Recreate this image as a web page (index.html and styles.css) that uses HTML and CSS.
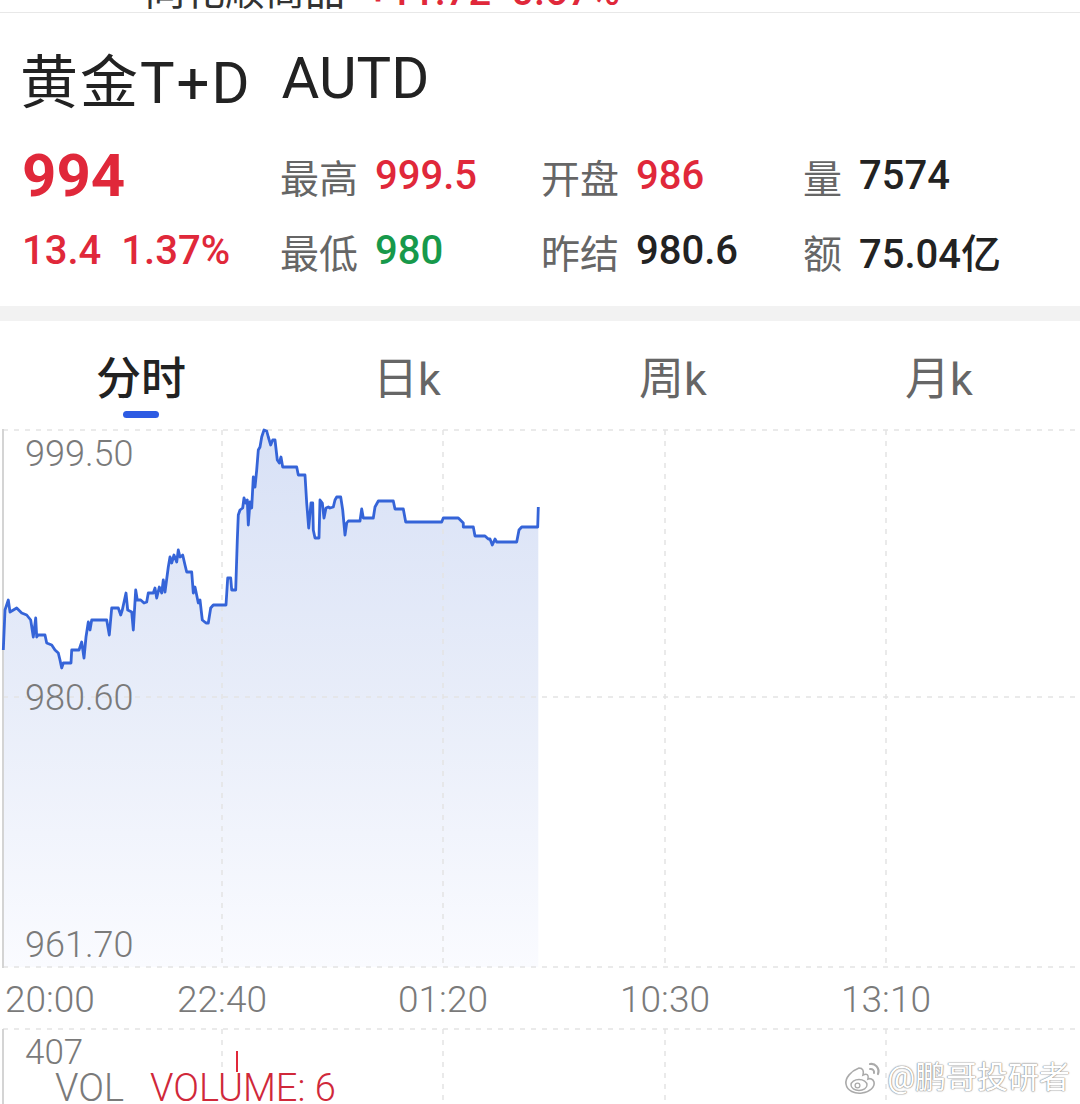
FILE: index.html
```html
<!DOCTYPE html>
<html lang="zh-CN">
<head>
<meta charset="utf-8">
<title>黄金T+D</title>
<link rel="stylesheet" href="styles.css">
</head>
<body>
<div class="page">
  <div class="topstrip">
    <div class="ticker"><span class="tk-name">同花顺商品</span><span class="tk-val">+11.72&nbsp;&nbsp;0.67%</span></div>
  </div>

  <div class="title"><span class="name">黄金T+D</span><span class="code">AUTD</span></div>

  <div class="quote">
    <div class="cell"><span class="price up">994</span></div>
    <div class="cell"><span class="lbl">最高</span><span class="val up">999.5</span></div>
    <div class="cell"><span class="lbl">开盘</span><span class="val up">986</span></div>
    <div class="cell"><span class="lbl">量</span><span class="val">7574</span></div>
    <div class="cell changes"><span class="chg up">13.4</span><span class="chg up">1.37%</span></div>
    <div class="cell"><span class="lbl">最低</span><span class="val down">980</span></div>
    <div class="cell"><span class="lbl">昨结</span><span class="val">980.6</span></div>
    <div class="cell"><span class="lbl">额</span><span class="val">75.04亿</span></div>
  </div>

  <div class="band"></div>

  <div class="tabs">
    <div class="tab active"><span class="tab-text">分时</span><span class="tab-bar"></span></div>
    <div class="tab"><span class="tab-text">日k</span></div>
    <div class="tab"><span class="tab-text">周k</span></div>
    <div class="tab"><span class="tab-text">月k</span></div>
  </div>

  <div class="chart">
    <svg class="chart-svg" width="1080" height="542" viewBox="0 428 1080 542" xmlns="http://www.w3.org/2000/svg">
      <defs>
        <linearGradient id="fillg" x1="0" y1="430" x2="0" y2="967" gradientUnits="userSpaceOnUse">
          <stop offset="0" stop-color="#d8e1f6"/>
          <stop offset="0.5" stop-color="#e8edf9"/>
          <stop offset="1" stop-color="#fafbff"/>
        </linearGradient>
      </defs>
      <path d="M3.3,650 L5,610 L8.3,600 L10,612 L16.7,608 L21.7,613 L26.7,615 L30.7,620 L33.3,637 L35.7,618 L36.7,637 L38.3,635 L45,635 L46.7,643 L51.7,645 L55,650 L58.3,653 L60,660 L61.7,668 L63.3,663 L71,663 L71.7,650 L79,650 L81.7,642 L84,658 L86,637 L88.3,622 L90,630 L91.7,620 L106.7,620 L109.3,635 L111.7,608 L118.3,608 L120.7,615 L122.3,610 L126,593 L127.7,610 L131.7,612 L133.3,630 L135.7,590 L137.3,600 L140.7,600 L144,603 L146.7,602 L148.3,593 L153.3,593 L155,588 L156.7,598 L159.3,587 L161.7,593 L163.3,580 L165,592 L168.3,567 L170,557 L171.7,563 L174,555 L176.7,562 L178.3,550 L180,557 L182.7,555 L185,565 L186.7,572 L191.7,572 L193.3,593 L195,587 L198.3,603 L200,600 L202.3,620 L206,623 L208.3,623 L210.7,608 L213.3,605 L226,605 L227.7,578 L230.7,578 L231.7,590 L235.7,590 L237.3,540 L238.3,515 L240,510 L242.7,508 L244,498 L245.7,503 L247.3,500 L248.3,525 L250,502 L251.7,508 L253.3,477 L255,487 L256.7,470 L258.3,450 L260,447 L261.7,437 L264,430 L266.7,431 L268.3,437 L270.7,445 L272.7,440 L275,440 L277.3,460 L279.3,463 L281,457 L282.7,467 L296.7,467 L298.3,475 L305,475 L306.7,503 L308.7,528 L311,503 L312.7,503 L313.3,530 L315,538 L319,538 L320,500 L322.3,503 L324,518 L326,508 L328.3,507 L330,508 L333.3,507 L335,500 L336.7,497 L340.7,497 L342.7,510 L345,535 L346.7,523 L348.3,521 L360,521 L361.7,509 L363.3,518 L373.3,518 L375,507 L378.3,501 L393.3,501 L395,509 L403.3,509 L405.7,522 L441.7,522 L443.3,518 L458.3,518 L463.3,523 L463.3,527 L473.3,527 L475,536 L485,536 L488.3,539 L490,539 L492.3,545 L495,539 L496.7,542 L516.7,542 L519,530 L521.7,527 L537.7,527 L538.3,507 L538.3,967 L3.3,967 Z" fill="url(#fillg)"/>
      <g class="grid">
        <line x1="3" y1="430" x2="1080" y2="430"/>
        <line x1="3" y1="697" x2="1080" y2="697"/>
        <line x1="3" y1="967" x2="1080" y2="967"/>
        <line x1="222" y1="430" x2="222" y2="967"/>
        <line x1="443" y1="430" x2="443" y2="967"/>
        <line x1="665" y1="430" x2="665" y2="967"/>
        <line x1="886" y1="430" x2="886" y2="967"/>
      </g>
      <line class="axis" x1="3" y1="429" x2="3" y2="968"/>
      <path class="price-line" d="M3.3,650 L5,610 L8.3,600 L10,612 L16.7,608 L21.7,613 L26.7,615 L30.7,620 L33.3,637 L35.7,618 L36.7,637 L38.3,635 L45,635 L46.7,643 L51.7,645 L55,650 L58.3,653 L60,660 L61.7,668 L63.3,663 L71,663 L71.7,650 L79,650 L81.7,642 L84,658 L86,637 L88.3,622 L90,630 L91.7,620 L106.7,620 L109.3,635 L111.7,608 L118.3,608 L120.7,615 L122.3,610 L126,593 L127.7,610 L131.7,612 L133.3,630 L135.7,590 L137.3,600 L140.7,600 L144,603 L146.7,602 L148.3,593 L153.3,593 L155,588 L156.7,598 L159.3,587 L161.7,593 L163.3,580 L165,592 L168.3,567 L170,557 L171.7,563 L174,555 L176.7,562 L178.3,550 L180,557 L182.7,555 L185,565 L186.7,572 L191.7,572 L193.3,593 L195,587 L198.3,603 L200,600 L202.3,620 L206,623 L208.3,623 L210.7,608 L213.3,605 L226,605 L227.7,578 L230.7,578 L231.7,590 L235.7,590 L237.3,540 L238.3,515 L240,510 L242.7,508 L244,498 L245.7,503 L247.3,500 L248.3,525 L250,502 L251.7,508 L253.3,477 L255,487 L256.7,470 L258.3,450 L260,447 L261.7,437 L264,430 L266.7,431 L268.3,437 L270.7,445 L272.7,440 L275,440 L277.3,460 L279.3,463 L281,457 L282.7,467 L296.7,467 L298.3,475 L305,475 L306.7,503 L308.7,528 L311,503 L312.7,503 L313.3,530 L315,538 L319,538 L320,500 L322.3,503 L324,518 L326,508 L328.3,507 L330,508 L333.3,507 L335,500 L336.7,497 L340.7,497 L342.7,510 L345,535 L346.7,523 L348.3,521 L360,521 L361.7,509 L363.3,518 L373.3,518 L375,507 L378.3,501 L393.3,501 L395,509 L403.3,509 L405.7,522 L441.7,522 L443.3,518 L458.3,518 L463.3,523 L463.3,527 L473.3,527 L475,536 L485,536 L488.3,539 L490,539 L492.3,545 L495,539 L496.7,542 L516.7,542 L519,530 L521.7,527 L537.7,527 L538.3,507"/>
    </svg>
    <span class="ylab y-top">999.50</span>
    <span class="ylab y-mid">980.60</span>
    <span class="ylab y-bot">961.70</span>
  </div>

  <div class="times">
    <span class="t t0">20:00</span>
    <span class="t t1">22:40</span>
    <span class="t t2">01:20</span>
    <span class="t t3">10:30</span>
    <span class="t t4">13:10</span>
  </div>

  <div class="vol">
    <svg class="vol-svg" width="1080" height="76" viewBox="0 1028 1080 76" xmlns="http://www.w3.org/2000/svg">
      <g class="grid">
        <line x1="3" y1="1029" x2="1080" y2="1029"/>
        <line x1="222" y1="1029" x2="222" y2="1104"/>
        <line x1="443" y1="1029" x2="443" y2="1104"/>
        <line x1="665" y1="1029" x2="665" y2="1104"/>
        <line x1="886" y1="1029" x2="886" y2="1104"/>
      </g>
      <line class="axis" x1="3" y1="1029" x2="3" y2="1104"/>
      <line class="vbar" x1="237" y1="1051" x2="237" y2="1072"/>
    </svg>
    <span class="vlab v-max">407</span>
    <div class="vlegend"><span class="vol-name">VOL</span><span class="vol-val">VOLUME: 6</span></div>
  </div>

  <div class="watermark">
    <svg class="wb-logo" width="40" height="36" viewBox="0 0 40 36" xmlns="http://www.w3.org/2000/svg">
      <path d="M16 8 C8 11 2 18 3 24 C4 31 12 34 19 33 C27 32 32 27 31 22 C30 19 27 18 25 19 C26 15 24 13 20 15 C21 11 20 8 16 8 Z" fill="#fff" stroke="#aaa" stroke-width="1.6"/>
      <ellipse cx="16" cy="25" rx="8" ry="5.5" fill="#fff" stroke="#aaa" stroke-width="1.4"/>
      <circle cx="14.5" cy="25.5" r="2.4" fill="#fff" stroke="#aaa" stroke-width="1.3"/>
      <path d="M27 4 C32 3 37 8 35 14" fill="none" stroke="#aaa" stroke-width="2.2" stroke-linecap="round"/>
      <path d="M27 9 C29.5 8.5 31.5 10.5 31 13" fill="none" stroke="#aaa" stroke-width="2" stroke-linecap="round"/>
    </svg>
    <span class="wb-text">@鹏哥投研者</span>
  </div>
</div>
</body>
</html>
```

FILE: styles.css
```css
* {
  box-sizing: border-box;
  margin: 0;
  padding: 0;
}

html, body {
  width: 1080px;
  height: 1104px;
  overflow: hidden;
  background: #ffffff;
}

body {
  font-family: Roboto, "Noto Sans CJK SC", sans-serif;
  color: #222222;
}

.page {
  position: relative;
  width: 1080px;
  height: 1104px;
}

/* cut-off ticker at the very top */
.topstrip {
  height: 13px;
  overflow: hidden;
  border-bottom: 1px solid #e8e8e8;
}

.ticker {
  display: flex;
  gap: 22px;
  margin-top: -28px;
  padding-left: 145px;
  font-size: 40px;
  line-height: 40px;
  white-space: nowrap;
}

.tk-name {
  color: #333333;
}

.tk-val {
  color: #e0283a;
  font-weight: 500;
}

/* title */
.title {
  height: 117px;
  padding: 12px 0 0 20px;
  display: flex;
  align-items: center;
  font-size: 58px;
  color: #222222;
  white-space: nowrap;
}

.name {
  letter-spacing: 2px;
}

.code {
  margin-left: 30px;
}

/* quote grid */
.quote {
  display: grid;
  grid-template-columns: 258px 261px 262px 1fr;
  grid-auto-rows: 75px;
  padding: 8px 0 18px 22px;
}

.cell {
  display: flex;
  align-items: center;
  gap: 17px;
  white-space: nowrap;
}

.cell.changes {
  gap: 20px;
}

.lbl {
  font-size: 39px;
  color: #666666;
}

.val {
  font-size: 40px;
  font-weight: 500;
  color: #222222;
}

.price {
  font-size: 60px;
  font-weight: 700;
}

.chg {
  font-size: 40px;
  font-weight: 500;
}

.up {
  color: #e0283a;
}

.down {
  color: #17994b;
}

.band {
  height: 15px;
  background: #f2f2f2;
}

/* tabs */
.tabs {
  height: 107px;
  display: grid;
  grid-template-columns: repeat(4, 1fr);
  padding: 0 8px;
}

.tab {
  display: flex;
  flex-direction: column;
  align-items: center;
  padding-top: 34px;
}

.tab-text {
  font-size: 45px;
  line-height: 50px;
  color: #666666;
}

.tab.active .tab-text {
  color: #222222;
  font-weight: 500;
}

.tab-bar {
  width: 36px;
  height: 7px;
  margin-top: 6px;
  border-radius: 4px;
  background: #2d5be3;
}

/* chart */
.chart {
  position: relative;
  height: 542px;
}

.chart-svg,
.vol-svg {
  display: block;
}

.grid line {
  stroke: #e4e4e4;
  stroke-width: 1.5;
  stroke-dasharray: 5 6;
}

.axis {
  stroke: #d4d4d4;
  stroke-width: 2;
}

.price-line {
  fill: none;
  stroke: #3564d8;
  stroke-width: 2.8;
  stroke-linejoin: round;
}

.ylab {
  position: absolute;
  left: 25px;
  font-size: 36px;
  line-height: 36px;
  font-weight: 300;
  color: #7a7a7a;
}

.y-top {
  top: 8px;
}

.y-mid {
  top: 252px;
}

.y-bot {
  top: 499px;
}

/* time axis */
.times {
  position: relative;
  height: 58px;
}

.t {
  position: absolute;
  top: 0;
  font-size: 37px;
  line-height: 60px;
  font-weight: 300;
  color: #7a7a7a;
  transform: translateX(-50%);
}

.t0 {
  left: 5px;
  transform: none;
}

.t1 {
  left: 222px;
}

.t2 {
  left: 443px;
}

.t3 {
  left: 665px;
}

.t4 {
  left: 886px;
}

/* volume */
.vol {
  position: relative;
  height: 76px;
}

.vlab {
  position: absolute;
  left: 25px;
  top: 7px;
  font-size: 35px;
  line-height: 36px;
  font-weight: 300;
  color: #7a7a7a;
}

.vlegend {
  position: absolute;
  left: 55px;
  top: 42px;
  display: flex;
  gap: 26px;
  font-size: 38px;
  line-height: 36px;
  font-weight: 300;
  white-space: nowrap;
}

.vol-name {
  color: #7a7a7a;
}

.vol-val {
  color: #d0283a;
}

.vbar {
  stroke: #e0283a;
  stroke-width: 2;
}

/* watermark */
.watermark {
  position: absolute;
  right: 10px;
  bottom: 8px;
  display: flex;
  align-items: center;
  gap: 4px;
}

.wb-text {
  font-size: 31px;
  line-height: 36px;
  color: #ffffff;
  text-shadow: 0 0 1px #888, 0 0 1px #888, 0 0 2px #aaa;
}
```
